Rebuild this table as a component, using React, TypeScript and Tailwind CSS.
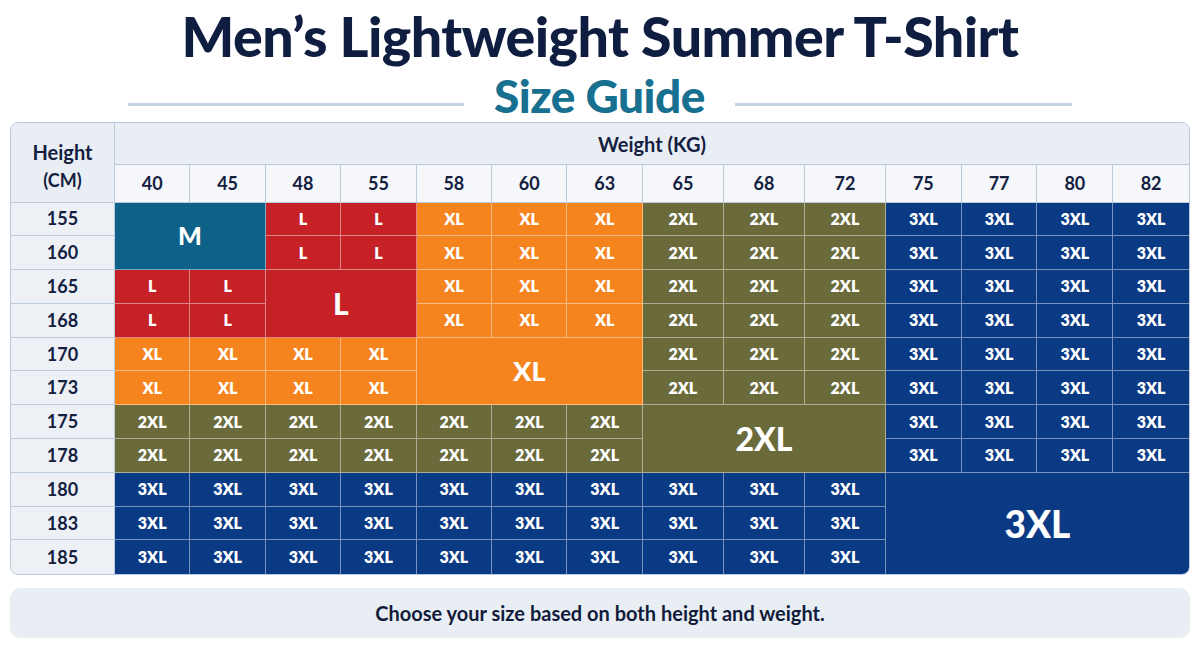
import React from "react"

type Size = "M" | "L" | "XL" | "2XL" | "3XL"

const heights = [155, 160, 165, 168, 170, 173, 175, 178, 180, 183, 185]
const weights = [40, 45, 48, 55, 58, 60, 63, 65, 68, 72, 75, 77, 80, 82]

const sizeBg: Record<Size, string> = {
  M: "bg-[#0e6289]",
  L: "bg-[#c52127]",
  XL: "bg-[#f5841e]",
  "2XL": "bg-[#6a6a3b]",
  "3XL": "bg-[#0b3a85]",
}

// which size sits at a given row / weight column
function sizeAt(r: number, c: number): Size {
  if (r >= 8 || c >= 10) return "3XL"
  if (r >= 6 || c >= 7) return "2XL"
  if (r >= 4 || c >= 4) return "XL"
  if (r <= 1 && c <= 1) return "M"
  return "L"
}

interface Block {
  r: number
  c: number
  rs: number
  cs: number
  span: string
  text: string
}

// merged cells with one big label
const blocks: Block[] = [
  { r: 0, c: 0, rs: 2, cs: 2, span: "row-span-2 col-span-2", text: "text-[25px]" },
  { r: 2, c: 2, rs: 2, cs: 2, span: "row-span-2 col-span-2", text: "text-[30px]" },
  { r: 4, c: 4, rs: 2, cs: 3, span: "row-span-2 col-span-3", text: "text-[27px]" },
  { r: 6, c: 7, rs: 2, cs: 3, span: "row-span-2 col-span-3", text: "text-[32px]" },
  { r: 8, c: 10, rs: 3, cs: 4, span: "row-span-3 col-span-4", text: "text-[37px]" },
]

function blockAt(r: number, c: number) {
  return blocks.find((b) => r >= b.r && r < b.r + b.rs && c >= b.c && c < b.c + b.cs)
}

function SizeTable() {
  const cells: React.ReactNode[] = []

  cells.push(
    <div
      key="height-head"
      className="row-span-2 flex flex-col items-center justify-center border-r border-b border-[#bccbdc] bg-[#e9eef5] pt-[8px] text-[#14203f]"
    >
      <span className="text-[20px] font-bold leading-[28px]">Height</span>
      <span className="text-[18px] font-bold leading-[28px]">(CM)</span>
    </div>
  )
  cells.push(
    <div
      key="weight-head"
      className="col-span-14 flex items-center justify-center border-b border-[#bccbdc] bg-[#e9eef5] pt-[2px] text-[20px] font-bold text-[#14203f]"
    >
      Weight (KG)
    </div>
  )
  weights.forEach((w, c) => {
    cells.push(
      <div
        key={`w-${w}`}
        className={
          "flex items-center justify-center border-b border-[#bccbdc] bg-[#f5f7fa] text-[18px] font-bold text-[#14203f] " +
          (c === weights.length - 1 ? "" : "border-r")
        }
      >
        {w}
      </div>
    )
  })

  heights.forEach((h, r) => {
    const lastRow = r === heights.length - 1
    cells.push(
      <div
        key={`h-${h}`}
        className={
          "flex items-center justify-center border-r border-[#bccbdc] bg-[#edf1f6] text-[18px] font-bold text-[#14203f] " +
          (lastRow ? "" : "border-b")
        }
      >
        {h}
      </div>
    )
    weights.forEach((w, c) => {
      const block = blockAt(r, c)
      const size = sizeAt(r, c)
      if (block) {
        if (block.r !== r || block.c !== c) return
        const endRow = block.r + block.rs === heights.length
        const endCol = block.c + block.cs === weights.length
        cells.push(
          <div
            key={`b-${r}-${c}`}
            className={[
              "flex items-center justify-center border-white/45 font-black text-white",
              block.span,
              block.text,
              sizeBg[size],
              endRow ? "" : "border-b",
              endCol ? "" : "border-r",
            ].join(" ")}
          >
            {size}
          </div>
        )
        return
      }
      cells.push(
        <div
          key={`c-${r}-${c}`}
          className={[
            "flex items-center justify-center border-white/45 text-[16px] font-extrabold text-white",
            sizeBg[size],
            lastRow ? "" : "border-b",
            c === weights.length - 1 ? "" : "border-r",
          ].join(" ")}
        >
          {size}
        </div>
      )
    })
  })

  return (
    <div className="mx-[10px] overflow-hidden rounded-[8px] border border-[#b9c8da]">
      <div className="grid grid-cols-[104px_repeat(7,75.4fr)_repeat(3,81fr)_repeat(4,75.75fr)] grid-rows-[42px_38px_repeat(11,33.8px)]">
        {cells}
      </div>
    </div>
  )
}

export default function App() {
  return (
    <div className="h-[653px] w-[1200px] overflow-hidden bg-white font-['Lato','Noto_Sans',sans-serif]">
      <h1 className="pt-[8px] text-center text-[55.5px] font-black leading-none tracking-[-0.01em] text-[#0f1d40]">
        Men’s Lightweight Summer T-Shirt
      </h1>
      <div className="mt-[9px] flex items-center justify-center gap-[30px]">
        <div className="mt-[18px] h-[3px] w-[336px] bg-[#c7d4e3]" />
        <span className="text-[46px] font-black leading-none tracking-[-0.01em] text-[#17708f]">Size Guide</span>
        <div className="mt-[18px] h-[3px] w-[337px] bg-[#c7d4e3]" />
      </div>
      <div className="mt-[3px]">
        <SizeTable />
      </div>
      <div className="mx-[10px] mt-[13px] flex h-[50px] items-center justify-center rounded-[10px] bg-[#e9eef5] text-[20px] font-bold text-[#111c3a]">
        Choose your size based on both height and weight.
      </div>
    </div>
  )
}
